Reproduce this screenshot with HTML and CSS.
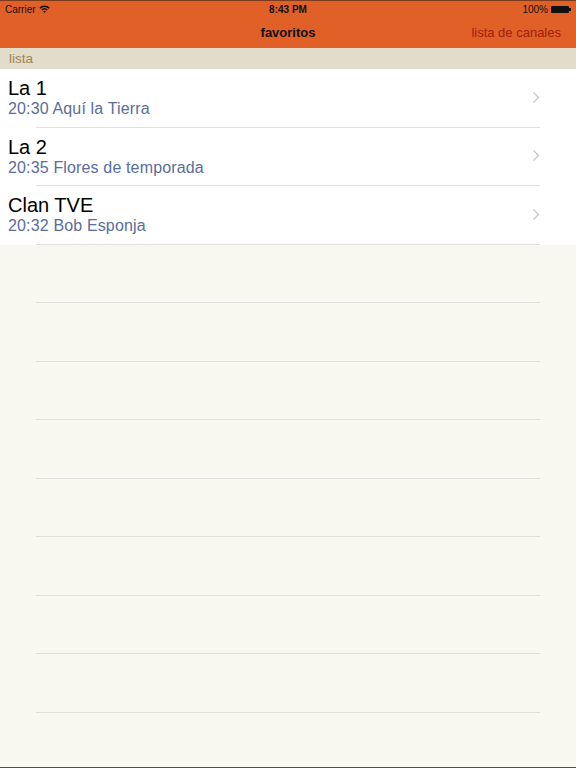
FILE: index.html
```html
<!DOCTYPE html>
<html lang="es">
<head>
    <meta charset="UTF-8">
    <meta name="viewport" content="width=device-width, initial-scale=1.0">
    <title>favoritos</title>
    <link rel="stylesheet" href="styles.css">
</head>
<body>
    <header class="topbar">
        <div class="status">
            <div class="status-left">
                Carrier
                <svg class="wifi" width="11" height="8" viewBox="0 0 11 8">
                    <path d="M0.3 2.6 A7.5 7.5 0 0 1 10.7 2.6 L9.6 3.7 A6 6 0 0 0 1.4 3.7 Z" fill="#111"/>
                    <path d="M2.2 4.5 A4.8 4.8 0 0 1 8.8 4.5 L7.7 5.6 A3.3 3.3 0 0 0 3.3 5.6 Z" fill="#111"/>
                    <path d="M4.1 6.4 A2 2 0 0 1 6.9 6.4 L5.5 7.9 Z" fill="#111"/>
                </svg>
            </div>
            <div class="status-time">8:43 PM</div>
            <div class="status-right">
                100%
                <span class="battery"></span>
            </div>
        </div>
        <nav class="navbar">
            <span class="nav-title">favoritos</span>
            <a class="nav-link" href="#">lista de canales</a>
        </nav>
    </header>

    <div class="section">lista</div>

    <ul class="list">
        <li class="row filled">
            <div class="row-text">
                <div class="channel">La 1</div>
                <div class="show">20:30 Aquí la Tierra</div>
            </div>
            <svg class="chevron" width="8" height="13" viewBox="0 0 8 13"><path d="M1.5 1.5 L6.5 6.5 L1.5 11.5" fill="none" stroke="#c7c7cc" stroke-width="1.3"/></svg>
        </li>
        <li class="row filled">
            <div class="row-text">
                <div class="channel">La 2</div>
                <div class="show">20:35 Flores de temporada</div>
            </div>
            <svg class="chevron" width="8" height="13" viewBox="0 0 8 13"><path d="M1.5 1.5 L6.5 6.5 L1.5 11.5" fill="none" stroke="#c7c7cc" stroke-width="1.3"/></svg>
        </li>
        <li class="row filled">
            <div class="row-text">
                <div class="channel">Clan TVE</div>
                <div class="show">20:32 Bob Esponja</div>
            </div>
            <svg class="chevron" width="8" height="13" viewBox="0 0 8 13"><path d="M1.5 1.5 L6.5 6.5 L1.5 11.5" fill="none" stroke="#c7c7cc" stroke-width="1.3"/></svg>
        </li>
        <li class="row"></li>
        <li class="row"></li>
        <li class="row"></li>
        <li class="row"></li>
        <li class="row"></li>
        <li class="row"></li>
        <li class="row"></li>
        <li class="row"></li>
    </ul>
</body>
</html>
```

FILE: styles.css
```css
html, body {
    height: 100%;
}
body {
    margin: 0;
    background-color: #f8f7f0;
    font-family: "Liberation Sans", Arial, sans-serif;
    box-sizing: border-box;
    border-bottom: 1px solid #505048;
    overflow: hidden;
}
.topbar {
    background-color: #e06028;
    border-top: 1px solid #7a3a1c;
}
.status {
    height: 17px;
    display: flex;
    align-items: center;
    justify-content: space-between;
    padding: 0 5px;
    font-size: 10px;
    color: #111;
}
.status-left, .status-right {
    width: 120px;
    display: flex;
    align-items: center;
    gap: 3px;
}
.status-right {
    justify-content: flex-end;
}
.status-time {
    font-weight: bold;
}
.wifi {
    margin-top: -1px;
}
.battery {
    position: relative;
    width: 18px;
    height: 7px;
    background-color: #111;
    border-radius: 1px;
    margin-right: 2px;
}
.battery::after {
    content: "";
    position: absolute;
    right: -2px;
    top: 2px;
    width: 2px;
    height: 3px;
    background-color: #111;
}
.navbar {
    position: relative;
    height: 30px;
    display: flex;
    align-items: center;
    justify-content: center;
    box-sizing: border-box;
    font-size: 13px;
}
.nav-title {
    font-weight: bold;
    color: #111;
    margin-top: -2px;
}
.nav-link {
    position: absolute;
    right: 15px;
    top: 7px;
    color: #a1200f;
    text-decoration: none;
}
.section {
    height: 21px;
    line-height: 21px;
    padding-left: 9px;
    background-color: #e1ddca;
    color: #a08459;
    font-size: 13.5px;
}
.list {
    margin: 0;
    padding: 0;
    list-style: none;
}
.row {
    position: relative;
    height: 58.5px;
    box-sizing: border-box;
    display: flex;
    align-items: center;
    justify-content: space-between;
    padding: 0 36px 0 8px;
}
.row.filled {
    background-color: #fff;
}
.row::after {
    content: "";
    position: absolute;
    left: 36px;
    right: 36px;
    bottom: 0;
    height: 1px;
    background-color: #e0e0de;
}
.row-text {
    align-self: flex-start;
    padding-top: 8px;
}
.channel {
    font-size: 20px;
    line-height: 22px;
    color: #000;
}
.show {
    font-size: 16px;
    line-height: 19px;
    color: #5a6d9b;
    letter-spacing: 0.15px;
}
.chevron {
    margin-top: -2px;
}
```
